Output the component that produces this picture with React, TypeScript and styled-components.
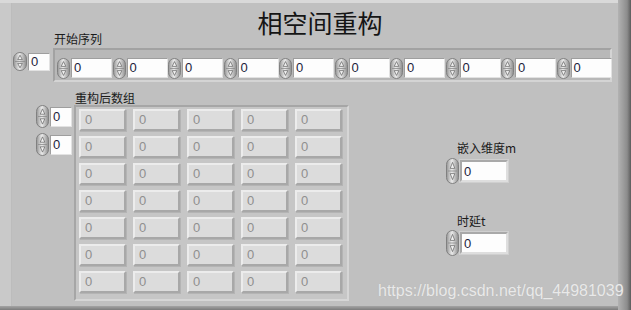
import React from 'react'
import styled, { createGlobalStyle } from 'styled-components'

const GlobalStyle = createGlobalStyle`
  html, body {
    margin: 0;
    padding: 0;
    background: #c0c0c0;
  }
  body {
    font-family: 'Liberation Sans', 'Noto Sans CJK SC', sans-serif;
  }
`

const Window = styled.div`
  position: relative;
  width: 631px;
  height: 310px;
  display: flex;
  flex-flow: row nowrap;
  background: #c0c0c0;
  overflow: hidden;
`

const Body = styled.div`
  flex: 1;
  display: flex;
  flex-flow: column nowrap;
`

const TopEdge = styled.div`
  height: 3px;
  background: #d9d9d9;
`

const BottomEdge = styled.div`
  height: 4px;
  background: linear-gradient(to bottom, #a4a4a4, #7c7c7c);
`

const Middle = styled.div`
  flex: 1;
  display: flex;
  flex-flow: row nowrap;
`

const LeftStrip = styled.div`
  width: 12px;
  background: #c9c9c9;
  border-right: 1px solid #bcbcbc;
  box-sizing: border-box;
`

const RightStrip = styled.div`
  width: 13px;
  background: linear-gradient(to right, #b2b2b2, #a0a0a0 35%, #8c8c8c 70%, #5c5c5c);
`

const Panel = styled.div`
  flex: 1;
  display: flex;
  flex-flow: column nowrap;
`

const TitleRow = styled.div`
  height: 29px;
  box-sizing: border-box;
  padding: 7px 0 0 10px;
  display: flex;
  justify-content: center;
  align-items: flex-start;
`

const Title = styled.div`
  font-family: 'Noto Sans CJK SC', sans-serif;
  font-size: 25px;
  line-height: 25px;
  color: #151515;
`

const Label = styled.div<{ indent?: number; top?: number }>`
  font-family: 'Noto Sans CJK SC', sans-serif;
  font-size: 12px;
  line-height: 14px;
  height: 14px;
  color: #1a1a1a;
  padding-left: ${({ indent }) => indent ?? 0}px;
  margin-top: ${({ top }) => top ?? 0}px;
  white-space: nowrap;
`

const SequenceRow = styled.div`
  display: flex;
  flex-flow: row nowrap;
  align-items: flex-start;
  padding-left: 1px;
`

const Control = styled.div<{ top?: number }>`
  display: flex;
  flex-flow: row nowrap;
  align-items: center;
  margin-top: ${({ top }) => top ?? 0}px;
`

const SpinSvg = styled.svg`
  display: block;
  flex: none;
`

const NumBox = styled.div<{ w: number; h: number }>`
  width: ${({ w }) => w}px;
  height: ${({ h }) => h}px;
  box-sizing: border-box;
  margin-left: 1px;
  background: #fdfdfd;
  border: 1px solid;
  border-color: #9e9e9e #e2e2e2 #e2e2e2 #9e9e9e;
  font-size: 13px;
  line-height: ${({ h }) => h - 2}px;
  padding-left: 2px;
  color: #1d1d3c;
`

const FramedBox = styled(NumBox)`
  border: 2px solid;
  border-color: #a9a9a9 #dedede #dedede #a9a9a9;
  box-shadow: 0 0 0 1px #cfcfcf;
`

const ArrayGroup = styled.div`
  display: flex;
  flex-flow: column nowrap;
  margin-left: 3px;
`

const ArrayFrame = styled.div`
  margin-top: 2px;
  width: 559px;
  height: 34px;
  box-sizing: border-box;
  border: 2px solid;
  border-color: #a2a2a2 #d4d4d4 #d4d4d4 #a2a2a2;
  background: #b8b8b8;
  padding: 4px 3px 0 2px;
  display: flex;
  flex-flow: row nowrap;
  gap: 0.5px;
`

const BottomRow = styled.div`
  margin-top: 9px;
  padding-left: 24px;
  display: flex;
  flex-flow: row nowrap;
  align-items: flex-start;
`

const IndexColumn = styled.div`
  margin-top: 14px;
  display: flex;
  flex-flow: column nowrap;
  gap: 5px;
`

const MatrixGroup = styled.div`
  display: flex;
  flex-flow: column nowrap;
  margin-left: 2px;
`

const MatrixFrame = styled.div`
  width: 275px;
  height: 196px;
  box-sizing: border-box;
  border: 2px solid;
  border-color: #a6a6a6 #d6d6d6 #d6d6d6 #a6a6a6;
  background: #c6c6c6;
  padding: 2px 5px 6px 3px;
  display: grid;
  grid-template-columns: repeat(5, 47px);
  grid-auto-rows: 22px;
  column-gap: 7px;
  row-gap: 5px;
`

const Cell = styled.div`
  box-sizing: border-box;
  background: #dcdcdc;
  border: 2px solid;
  border-color: #ececec #a8a8a8 #a8a8a8 #ececec;
  box-shadow: 1px 1px 0 #b4b4b4;
  font-size: 13px;
  line-height: 18px;
  padding-left: 4px;
  color: #8f8f8f;
`

const RightColumn = styled.div`
  margin-left: 97px;
  margin-top: 50px;
  display: flex;
  flex-flow: column nowrap;
`

const Watermark = styled.div`
  position: absolute;
  left: 378px;
  top: 282px;
  font-family: 'Liberation Sans', sans-serif;
  font-size: 16px;
  line-height: 18px;
  color: #e9e9e9;
  text-shadow: 0 0 1px #b0b0b0;
  white-space: nowrap;
`

function Spinner({ w, h }: { w: number; h: number }) {
  const cx = w / 2
  const r = (w - 1) / 2
  const t = 2.3
  return (
    <SpinSvg width={w} height={h} viewBox={`0 0 ${w} ${h}`}>
      <defs>
        <linearGradient id="spinFill" x1="0" x2="1" y1="0" y2="0">
          <stop offset="0" stopColor="#959595" />
          <stop offset="0.45" stopColor="#ebebeb" />
          <stop offset="1" stopColor="#8c8c8c" />
        </linearGradient>
      </defs>
      <rect x={0.5} y={0.5} width={w - 1} height={h - 1} rx={r} ry={r} fill="url(#spinFill)" stroke="#808080" />
      <line x1={2} x2={w - 2} y1={h / 2} y2={h / 2} stroke="#8c8c8c" strokeWidth={0.8} />
      <path
        d={`M${cx} ${h * 0.17} L${cx + t} ${h * 0.4} L${cx - t} ${h * 0.4} Z`}
        fill="#f3f3f3"
        stroke="#707070"
        strokeWidth={0.8}
      />
      <path
        d={`M${cx} ${h * 0.83} L${cx + t} ${h * 0.6} L${cx - t} ${h * 0.6} Z`}
        fill="#f3f3f3"
        stroke="#707070"
        strokeWidth={0.8}
      />
    </SpinSvg>
  )
}

const sequence = Array.from({ length: 10 }, () => 0)
const matrix = Array.from({ length: 35 }, () => 0)

export default function App() {
  return (
    <>
      <GlobalStyle />
      <Window>
        <Body>
          <TopEdge />
          <Middle>
            <LeftStrip />
            <Panel>
              <TitleRow>
                <Title>相空间重构</Title>
              </TitleRow>

              <SequenceRow>
                <Control top={20}>
                  <Spinner w={14} h={19} />
                  <NumBox w={22} h={18}>0</NumBox>
                </Control>
                <ArrayGroup>
                  <Label indent={1}>开始序列</Label>
                  <ArrayFrame>
                    {sequence.map((v, i) => (
                      <Control key={i} top={2}>
                        <Spinner w={13} h={21} />
                        <NumBox w={41} h={20}>{v}</NumBox>
                      </Control>
                    ))}
                  </ArrayFrame>
                </ArrayGroup>
              </SequenceRow>

              <BottomRow>
                <IndexColumn>
                  <Control>
                    <Spinner w={13} h={23} />
                    <NumBox w={22} h={20}>0</NumBox>
                  </Control>
                  <Control>
                    <Spinner w={13} h={23} />
                    <NumBox w={22} h={20}>0</NumBox>
                  </Control>
                </IndexColumn>
                <MatrixGroup>
                  <Label indent={1}>重构后数组</Label>
                  <MatrixFrame>
                    {matrix.map((v, i) => (
                      <Cell key={i}>{v}</Cell>
                    ))}
                  </MatrixFrame>
                </MatrixGroup>
                <RightColumn>
                  <Label indent={11}>嵌入维度m</Label>
                  <Control top={3}>
                    <Spinner w={13} h={26} />
                    <FramedBox w={48} h={22}>0</FramedBox>
                  </Control>
                  <Label indent={11} top={30}>时延t</Label>
                  <Control top={2}>
                    <Spinner w={13} h={26} />
                    <FramedBox w={48} h={22}>0</FramedBox>
                  </Control>
                </RightColumn>
              </BottomRow>
            </Panel>
          </Middle>
          <BottomEdge />
        </Body>
        <RightStrip />
        <Watermark>https://blog.csdn.net/qq_44981039</Watermark>
      </Window>
    </>
  )
}
